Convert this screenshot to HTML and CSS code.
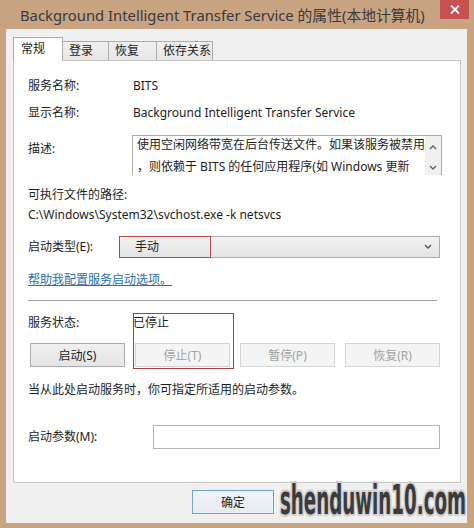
FILE: index.html
```html
<!DOCTYPE html>
<html lang="zh-CN">
<head>
    <meta charset="UTF-8">
    <title>Background Intelligent Transfer Service 的属性(本地计算机)</title>
    <link rel="stylesheet" href="styles.css">
</head>
<body>
    <div class="window">
        <!-- Barra de título -->
        <div class="titlebar">
            <span class="title">Background Intelligent Transfer Service 的属性(本地计算机)</span>
            <div class="close">
                <svg width="10" height="9" viewBox="0 0 10 9"><path d="M1 0.5 L9 8.5 M9 0.5 L1 8.5" stroke="#fff" stroke-width="1.8"/></svg>
            </div>
        </div>

        <div class="client">
            <!-- Abas -->
            <div class="tabs">
                <div class="tab active">常规</div>
                <div class="tab t2">登录</div>
                <div class="tab t3">恢复</div>
                <div class="tab t4">依存关系</div>
            </div>

            <div class="panel">
                <div class="row r1"><span class="label">服务名称:</span><span class="value">BITS</span></div>
                <div class="row r2"><span class="label">显示名称:</span><span class="value">Background Intelligent Transfer Service</span></div>
                <div class="row r3">
                    <span class="label desc-label">描述:</span>
                    <div class="desc">
                        <div class="desc-text">使用空闲网络带宽在后台传送文件。如果该服务被禁用<br>，则依赖于 BITS 的任何应用程序(如 Windows 更新</div>
                        <div class="scroll">
                            <svg width="8" height="6" viewBox="0 0 8 6"><path d="M1 5 L4 2 L7 5" fill="none" stroke="#606060" stroke-width="1.4"/></svg>
                            <svg width="8" height="6" viewBox="0 0 8 6"><path d="M1 1 L4 4 L7 1" fill="none" stroke="#606060" stroke-width="1.4"/></svg>
                        </div>
                    </div>
                </div>
                <div class="row r4">可执行文件的路径:</div>
                <div class="row r5">C:\Windows\System32\svchost.exe -k netsvcs</div>
                <div class="row r6">
                    <span class="label short">启动类型(E):</span>
                    <div class="select">
                        <span class="mark-a"></span>
                        <span class="select-text">手动</span>
                        <svg class="arrow" width="8" height="6" viewBox="0 0 8 6"><path d="M1 1 L4 4 L7 1" fill="none" stroke="#555" stroke-width="1.4"/></svg>
                    </div>
                </div>
                <div class="row r7"><a class="link" href="#">帮助我配置服务启动选项。</a></div>
                <div class="sep"></div>
                <div class="row r8">
                    <span class="label">服务状态:</span>
                    <span class="value status">已停止</span>
                </div>
                <div class="buttons">
                    <div class="btn">启动(S)</div>
                    <div class="btn disabled">停止(T)</div>
                    <div class="btn disabled">暂停(P)</div>
                    <div class="btn disabled">恢复(R)</div>
                    <span class="mark-b"></span>
                </div>
                <div class="row r10">当从此处启动服务时，你可指定所适用的启动参数。</div>
                <div class="row r11">
                    <span class="label params-label">启动参数(M):</span>
                    <div class="input"></div>
                </div>
            </div>

            <div class="footer">
                <div class="btn ok">确定</div>
            </div>
        </div>

        <!-- Marca d'água -->
        <div class="watermark">shenduwin10.com</div>
    </div>
</body>
</html>
```

FILE: styles.css
```css
/* Reset */
* {
    margin: 0;
    padding: 0;
    box-sizing: border-box;
}

body {
    font-family: "Noto Sans", "Noto Sans CJK SC", sans-serif;
    font-size: 12px;
    color: #1e1e1e;
    background: #c9a583;
}

.window {
    position: relative;
    width: 474px;
    height: 528px;
    display: flex;
    flex-direction: column;
    background: #c8a483;
    overflow: hidden;
}

/* Barra de título */
.titlebar {
    height: 29px;
    display: flex;
    align-items: flex-start;
    padding-left: 20px;
}

.title {
    margin-top: 4px;
    font-size: 14.8px;
    color: #3a3a3a;
    white-space: nowrap;
}

.close {
    margin-left: auto;
    margin-right: 5px;
    width: 29px;
    height: 19px;
    background: #c75050;
    display: flex;
    justify-content: center;
    align-items: center;
}

/* Área do cliente */
.client {
    flex: 1;
    margin: 0 7px 5px 6px;
    background: #f0f0f0;
    padding: 8px 6px 0 7px;
    display: flex;
    flex-direction: column;
}

.tabs {
    height: 23px;
    display: flex;
    align-items: flex-end;
}

.tab {
    height: 19px;
    border: 1px solid #acacac;
    border-bottom: none;
    border-left: none;
    background: linear-gradient(#f0f0f0, #e6e6e6);
    padding: 1px 0 0 6px;
    line-height: 16px;
}

.tab.active {
    position: relative;
    z-index: 1;
    height: 24px;
    margin-bottom: -1px;
    width: 50px;
    background: #fff;
    border-left: 1px solid #acacac;
    padding: 3px 0 0 7px;
}

.tab.t2 { width: 46px; }
.tab.t3 { width: 48px; }
.tab.t4 { width: 56px; }

.panel {
    height: 423px;
    background: #fff;
    border: 1px solid #c9c9c9;
    padding: 16px 20px 0 14px;
}

.row {
    display: flex;
    align-items: center;
    line-height: 18px;
}

.label {
    width: 105px;
    flex-shrink: 0;
}

.r2 { margin-top: 9px; }

.r3 {
    margin-top: 13px;
    align-items: flex-start;
}

.desc-label {
    width: 104px;
    padding-top: 5px;
}

.desc {
    flex: 1;
    height: 40px;
    border: 1px solid #acacac;
    border-bottom: none;
    display: flex;
}

.desc-text {
    flex: 1;
    padding: 0 0 0 4px;
    line-height: 22px;
    margin-top: -2px;
    white-space: nowrap;
    overflow: hidden;
}

.scroll {
    width: 16px;
    background: #f0f0f0;
    display: flex;
    flex-direction: column;
    justify-content: space-between;
    align-items: center;
    padding: 8px 0 4px;
}

.r4 { margin-top: 11px; }
.r5 { margin-top: 2px; }

.r6 { margin-top: 12px; }

.label.short { width: 91px; }

.select {
    position: relative;
    flex: 1;
    height: 22px;
    border: 1px solid #acacac;
    background: linear-gradient(#f2f2f2, #e4e4e4);
    display: flex;
    align-items: center;
    padding-left: 15px;
}

.select-text { flex: 1; }

.arrow { margin-right: 7px; }

/* Marcações vermelhas sobre a captura */
.mark-a {
    position: absolute;
    left: -1px;
    top: -1px;
    width: 92px;
    height: 22px;
    border: 1px solid #b54848;
}

.r7 { margin-top: 13px; }

.link {
    color: #2a6fb8;
    text-decoration: underline;
}

.sep {
    margin-top: 11px;
    height: 1px;
    width: 409px;
    background: #a0a0a0;
}

.r8 { margin-top: 13px; }

.buttons {
    position: relative;
    margin-top: 11px;
    padding-left: 2px;
    display: flex;
    justify-content: space-between;
}

.btn {
    width: 95px;
    height: 24px;
    border: 1px solid #acacac;
    background: linear-gradient(#f0f0f0, #e5e5e5);
    display: flex;
    justify-content: center;
    align-items: center;
}

.btn.disabled {
    color: #a3a3a3;
    border-color: #d5d5d5;
    background: #f4f4f4;
}

.mark-b {
    position: absolute;
    left: 105px;
    top: -30px;
    width: 101px;
    height: 56px;
    border: 1px solid #a83c40;
}

.r10 { margin-top: 14px; }

.r11 { margin-top: 26px; }

.params-label { width: 125px; }

.input {
    flex: 1;
    height: 24px;
    border: 1px solid #b4b4b4;
}

/* Rodapé */
.footer {
    display: flex;
    padding: 7px 0 0 179px;
}

.btn.ok {
    width: 82px;
    height: 24px;
    border: 1px solid #6fa4d4;
    background: linear-gradient(#f2f5f8, #e6ebf0);
    box-shadow: inset 0 0 0 1px #e8f2fb;
}

/* Marca d'água */
.watermark {
    position: absolute;
    left: 280px;
    top: 476px;
    font-family: "DejaVu Sans", sans-serif;
    font-weight: bold;
    font-size: 41px;
    color: #3b3b3b;
    white-space: nowrap;
    transform: scaleX(0.445);
    transform-origin: left top;
    text-shadow: 3px 0 0 #d0d0d0, -3px 0 0 #d0d0d0, 0 2px 0 #d0d0d0, 0 -2px 0 #d0d0d0,
                 2px 2px 0 #d0d0d0, -2px -2px 0 #d0d0d0, 2px -2px 0 #d0d0d0, -2px 2px 0 #d0d0d0;
}
```
